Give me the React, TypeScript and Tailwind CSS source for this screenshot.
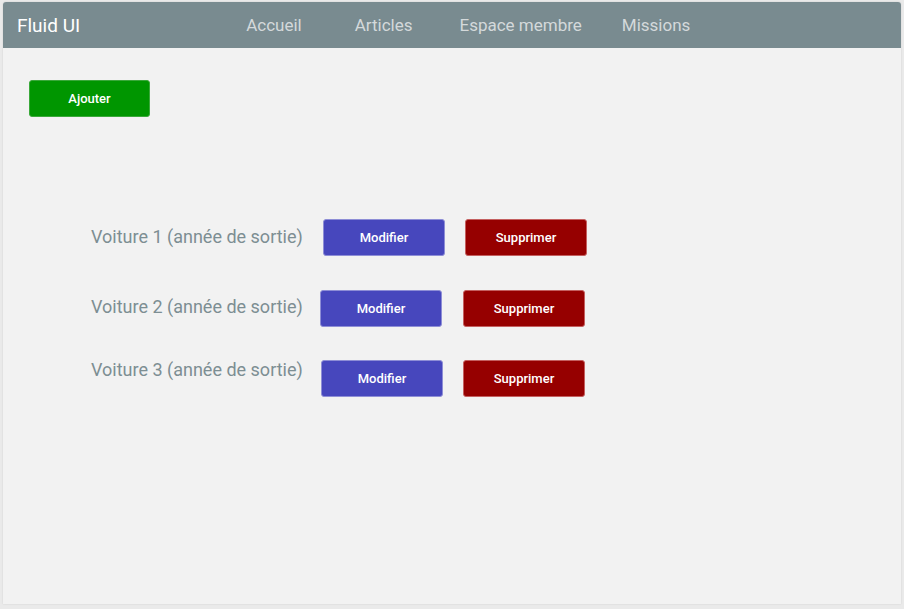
import React from "react";

const cars = [
  { name: "Voiture 1 (année de sortie)", top: "mt-0", textOffset: "mt-[8px]", gapA: "ml-[22px]", gapB: "ml-[20px]" },
  { name: "Voiture 2 (année de sortie)", top: "mt-[34px]", textOffset: "mt-[7px]", gapA: "ml-[19px]", gapB: "ml-[21px]" },
  { name: "Voiture 3 (année de sortie)", top: "mt-[33px]", textOffset: "mt-0", gapA: "ml-[20px]", gapB: "ml-[20px]" },
];

const nav = [
  { label: "Accueil", cls: "ml-[166px] mt-[1px]" },
  { label: "Articles", cls: "ml-[53px]" },
  { label: "Espace membre", cls: "ml-[47px] mt-[1px]" },
  { label: "Missions", cls: "ml-[40px]" },
];

export default function App() {
  return (
    <div
      className="h-[609px] w-[904px] bg-[#eaeaea] pt-[2px] pl-[3px] pr-[3px] pb-[5px]"
      style={{ fontFamily: "Roboto, 'Noto Sans', sans-serif" }}
    >
      <div className="h-full bg-[#f2f2f2] rounded-t-[3px] overflow-hidden shadow-[0_0_2px_rgba(0,0,0,0.12)]">
        {/* Header */}
        <header className="h-[46px] bg-[#798b90] flex items-center pl-[14px]">
          <span className="text-white text-[19px] leading-none mt-[1px]">Fluid UI</span>
          <nav className="flex items-center">
            {nav.map((n) => (
              <span key={n.label} className={`text-[#d4d9db] text-[17px] leading-none ${n.cls}`}>
                {n.label}
              </span>
            ))}
          </nav>
        </header>

        <div className="pl-[26px] pt-[32px]">
          <button className="w-[121px] h-[37px] bg-[#009600] border border-[#3aa83a] rounded-[3px] text-white text-[13px] font-medium">
            Ajouter
          </button>
        </div>

        {/* List */}
        <div className="pl-[88px] mt-[102px]">
          {cars.map((c) => (
            <div key={c.name} className={`flex items-start ${c.top}`}>
              <span className={`w-[210px] text-[18px] leading-[20px] text-[#7d8e93] whitespace-nowrap ${c.textOffset}`}>
                {c.name}
              </span>
              <button
                className={`w-[122px] h-[37px] bg-[#4747bd] border border-[#8e8ed6] rounded-[3px] text-white text-[13px] font-medium ${c.gapA}`}
              >
                Modifier
              </button>
              <button
                className={`w-[122px] h-[37px] bg-[#960000] border border-[#c46060] rounded-[3px] text-white text-[13px] font-medium ${c.gapB}`}
              >
                Supprimer
              </button>
            </div>
          ))}
        </div>
      </div>
    </div>
  );
}
